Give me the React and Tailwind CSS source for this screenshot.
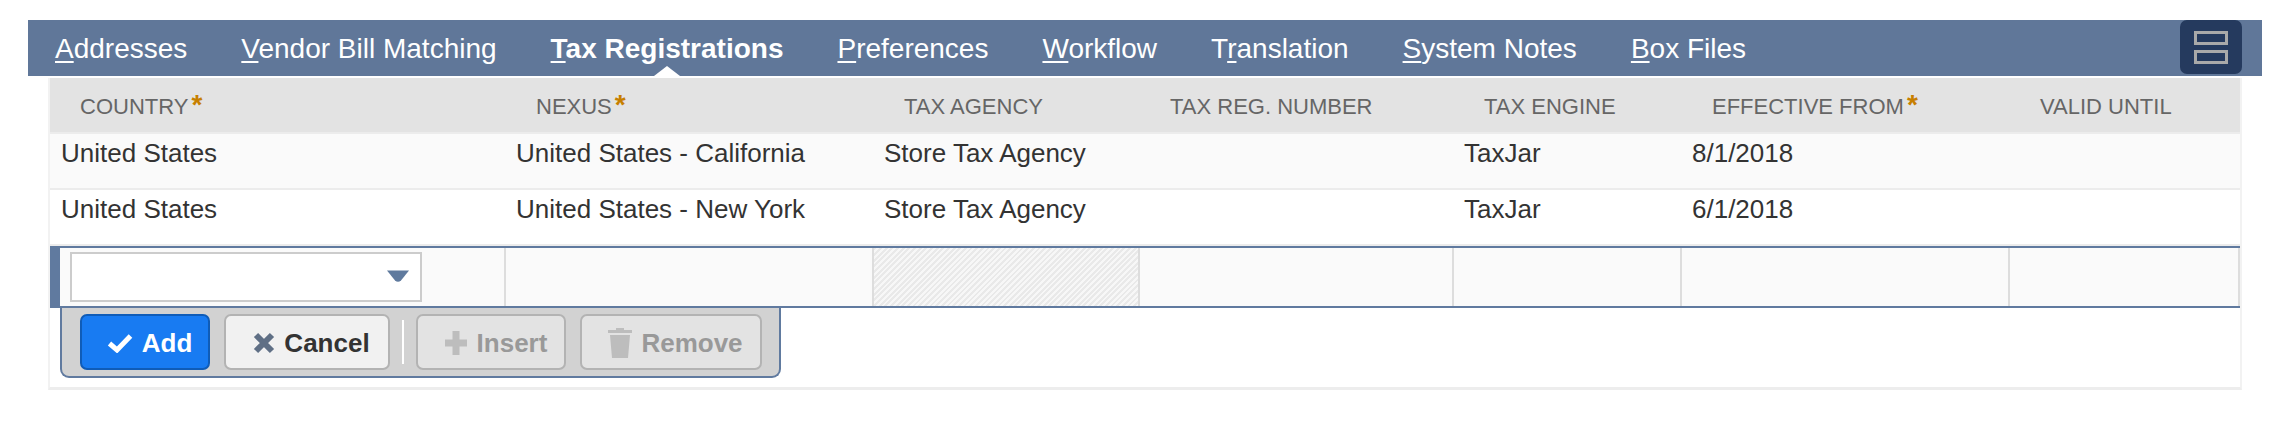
const abas = [
  { antes: '', letra: 'A', depois: 'ddresses' },
  { antes: '', letra: 'V', depois: 'endor Bill Matching' },
  { antes: '', letra: 'T', depois: 'ax Registrations', ativa: true },
  { antes: '', letra: 'P', depois: 'references' },
  { antes: '', letra: 'W', depois: 'orkflow' },
  { antes: 'T', letra: 'r', depois: 'anslation' },
  { antes: '', letra: 'S', depois: 'ystem Notes' },
  { antes: '', letra: 'B', depois: 'ox Files' },
]

const colunas = 'grid grid-cols-[456px_368px_266px_314px_228px_328px_230px]'

const cabecalhos = [
  { nome: 'COUNTRY', obrigatorio: true },
  { nome: 'NEXUS', obrigatorio: true },
  { nome: 'TAX AGENCY' },
  { nome: 'TAX REG. NUMBER' },
  { nome: 'TAX ENGINE' },
  { nome: 'EFFECTIVE FROM', obrigatorio: true },
  { nome: 'VALID UNTIL' },
]

const linhas = [
  { fundo: 'bg-[#fafafa]', dados: ['United States', 'United States - California', 'Store Tax Agency', '', 'TaxJar', '8/1/2018', ''] },
  { fundo: 'bg-white', dados: ['United States', 'United States - New York', 'Store Tax Agency', '', 'TaxJar', '6/1/2018', ''] },
]

function Botao({ icone, texto, cor, largura }) {
  return (
    <button className={`flex h-[56px] items-center justify-center gap-[9px] rounded-[7px] border-2 pl-[9px] pt-[2px] text-[26px] font-bold ${cor} ${largura}`}>
      {icone}
      {texto}
    </button>
  )
}

export default function App() {
  return (
    <div className="h-[424px] bg-white pt-[20px] font-['Liberation_Sans',Arial,sans-serif]">
      <div className="relative ml-[28px] flex h-[56px] w-[2234px] items-start gap-[54px] bg-[#607799] pl-[27px] pt-[12px] text-[28px] leading-[34px] text-white">
        {abas.map(a => (
          <div key={a.letra} className={`relative h-[44px] whitespace-nowrap ${a.ativa ? 'font-bold' : ''}`}>
            {a.antes}
            <u className="decoration-2 underline-offset-[3px]">{a.letra}</u>
            {a.depois}
            {a.ativa && (
              <span className="absolute bottom-0 left-1/2 h-0 w-0 -translate-x-1/2 border-x-[13px] border-b-[10px] border-x-transparent border-b-white" />
            )}
          </div>
        ))}
        <div className="absolute right-[20px] top-0 flex h-[54px] w-[62px] flex-col items-center justify-center gap-[5px] rounded-[7px] bg-[#253a5e]">
          <span className="h-[14px] w-[34px] border-[3px] border-[#a9a9a9]" />
          <span className="h-[14px] w-[34px] border-[3px] border-[#a9a9a9]" />
        </div>
      </div>

      <div className="ml-[48px] mt-[2px] w-[2194px] border-x-2 border-b-[3px] border-x-[#f2f2f2] border-b-[#ededed]">
        <div className={`${colunas} h-[56px] items-center border-b-2 border-[#ececec] bg-[#e3e3e3] pt-[3px] text-[22px] text-[#666666]`}>
          {cabecalhos.map(c => (
            <div key={c.nome} className="whitespace-nowrap pl-[30px]">
              {c.nome}
              {c.obrigatorio && <span className="ml-[3px] text-[28px] font-bold leading-[0] text-[#c77f00]">*</span>}
            </div>
          ))}
        </div>

        {linhas.map((l, i) => (
          <div key={i} className={`${colunas} h-[56px] border-b-2 border-[#ececec] ${l.fundo} text-[26px] leading-[36px] text-[#333333]`}>
            {l.dados.map((d, j) => (
              <div key={j} className={`whitespace-nowrap pt-[1px] ${j === 0 ? 'pl-[11px]' : 'pl-[10px]'}`}>{d}</div>
            ))}
          </div>
        ))}

        <div className={`${colunas} h-[62px] border-y-2 border-[#607a9f] bg-[#fafafa]`}>
          <div className="border-l-[10px] border-r-2 border-l-[#607a9f] border-r-[#dddddd] pl-[10px] pt-[4px]">
            <div className="relative h-[50px] w-[352px] border-2 border-[#cccccc] bg-white">
              <svg className="absolute right-[10px] top-[15px]" width="24" height="14" viewBox="0 0 24 14">
                <path d="M1 1.5h22l-8 10q-3 2.5-6 0z" fill="#5f7a9e" />
              </svg>
            </div>
          </div>
          <div className="border-r-2 border-[#dddddd]" />
          <div className="border-r-2 border-[#dddddd] bg-[repeating-linear-gradient(135deg,#e9e9e9_0px,#e9e9e9_2px,#f7f7f7_2px,#f7f7f7_4px)]" />
          <div className="border-r-2 border-[#dddddd]" />
          <div className="border-r-2 border-[#dddddd]" />
          <div className="border-r-2 border-[#dddddd]" />
          <div className="border-r-2 border-[#dddddd]" />
        </div>

        <div className="mb-[9px] ml-[10px] flex h-[70px] w-[721px] items-center gap-[14px] rounded-b-[9px] border-x-2 border-b-2 border-[#607a9f] bg-[#d2d2d2] pl-[18px]">
          <Botao
            texto="Add"
            largura="w-[130px]"
            cor="border-[#0f5cb8] bg-[#187bf2] text-white"
            icone={
              <svg width="26" height="20" viewBox="0 0 26 20">
                <path d="M2.5 10.5l7.5 6.5L23.5 3" fill="none" stroke="#ffffff" strokeWidth="5" />
              </svg>
            }
          />
          <Botao
            texto="Cancel"
            largura="w-[166px]"
            cor="border-[#b3b3b3] bg-[#f1f1f1] text-[#333333]"
            icone={
              <svg width="22" height="22" viewBox="0 0 22 22">
                <path d="M3 3l16 16M19 3L3 19" fill="none" stroke="#5f6f85" strokeWidth="6" />
              </svg>
            }
          />
          <div className="mx-[-2px] h-[44px] w-[2px] bg-white" />
          <Botao
            texto="Insert"
            largura="w-[150px]"
            cor="border-[#b3b3b3] bg-[#e3e3e3] text-[#999999]"
            icone={
              <svg width="24" height="26" viewBox="0 0 24 26">
                <path d="M12 1v24M1 13h22" fill="none" stroke="#bdbdbd" strokeWidth="7" />
              </svg>
            }
          />
          <Botao
            texto="Remove"
            largura="w-[182px]"
            cor="border-[#b3b3b3] bg-[#e3e3e3] text-[#999999]"
            icone={
              <svg width="24" height="30" viewBox="0 0 24 30">
                <path d="M8 0h8v2h8v3H0V2h8zM2 7h20l-2 23H4z" fill="#bdbdbd" />
              </svg>
            }
          />
        </div>
      </div>
    </div>
  )
}
